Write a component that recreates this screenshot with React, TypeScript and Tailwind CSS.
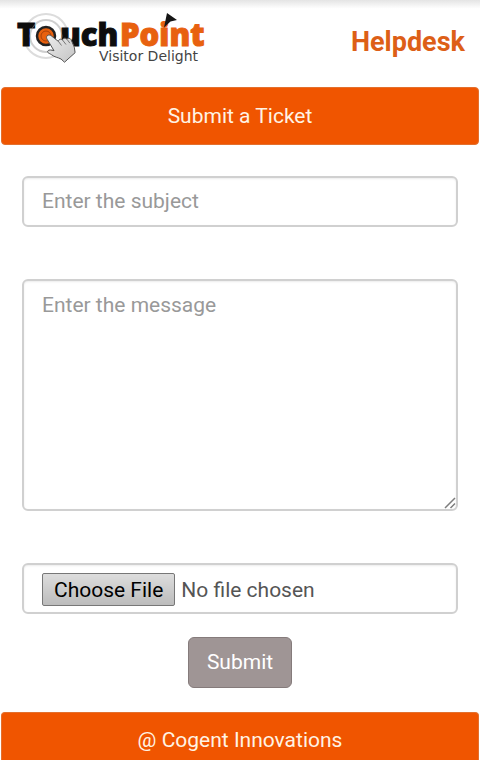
import type { ReactNode } from "react";

const field =
  "block w-full rounded-md border-2 border-[#d0d0d0] bg-white px-[18px] text-[21px] leading-7 text-[#555555] shadow-[inset_0_1px_2px_rgba(0,0,0,0.08)] placeholder:text-[#999999]";

/** Brand mark: lettering with the touch target and the hand over the "o". */
function Logo() {
  return (
    <svg width="196" height="60" viewBox="0 0 196 60" role="img" aria-label="TouchPoint Visitor Delight">
      <defs>
        <linearGradient id="hand" x1="0" y1="0" x2="1" y2="1">
          <stop offset="0" stopColor="#ececec" />
          <stop offset="1" stopColor="#c4c4c4" />
        </linearGradient>
      </defs>
      <circle cx="34" cy="28" r="22" fill="none" stroke="#dcdcdc" strokeWidth="2" />
      <circle cx="34" cy="28" r="16" fill="none" stroke="#d2d2d2" strokeWidth="2" />
      <g fontFamily="'Open Sans', 'Noto Sans', sans-serif" fontWeight="800" fontSize="31" strokeWidth="1">
        <text x="5" y="38" fill="#0d0d0d" stroke="#0d0d0d">T</text>
        <text x="48" y="38" fill="#0d0d0d" stroke="#0d0d0d">uch</text>
        <text x="108" y="38" fill="#e8610f" stroke="#e8610f">Point</text>
      </g>
      <circle cx="34" cy="28" r="16" fill="none" stroke="#c8c8c8" strokeOpacity="0.4" strokeWidth="1" />
      <circle cx="34" cy="28" r="11" fill="#ffffff" />
      <circle cx="34" cy="28" r="9" fill="#e8610f" stroke="#222222" strokeWidth="2.500" />
      <circle cx="34" cy="28" r="5" fill="none" stroke="#a8410a" strokeWidth="1" />
      <path
        d="M35 28c1-1.500 3-1.300 4.500 0l7 5.500c0-2.300 2.200-3 4-1.500 .3-2 2.800-2.600 4.400-.8 1-1.600 3.200-1.300 4.200.5l3.200 7.500 .8 5.500-10.600 9.500-3.500-3.200c-3-1.600-6.500-1.800-9.500-4.300-2.200-1.500-4.500-1.700-3.700-3.700 1-1.600 3.500-1 6.200-.3l-6.700-11.200c-.9-1.300-1.100-2.500-.3-3.500z"
        fill="url(#hand)"
        stroke="#555555"
        strokeWidth="1"
        strokeLinejoin="round"
      />
      <path d="M46.500 33.500l3 4M50.500 32l3.500 4.500M54.900 31.200l3 4" fill="none" stroke="#777777" strokeWidth="1" />
      <path d="M155 5l10 7-6.500 1.500-6.500 6z" fill="#151515" />
      <text x="87" y="53" fill="#444444" fontFamily="'DejaVu Sans', sans-serif" fontSize="14">
        Visitor Delight
      </text>
    </svg>
  );
}

function Bar({ children, className }: { children: ReactNode; className: string }) {
  return (
    <div className={`mx-px border border-[#e3702e] bg-[#f05500] text-center text-[21px] leading-7 text-[#fff3e4] ${className}`}>
      {children}
    </div>
  );
}

export default function App() {
  return (
    <div className="flex min-h-screen flex-col bg-white font-['Roboto',sans-serif]">
      <header className="flex h-[87px] items-start justify-between bg-linear-to-b from-[#e4e4e4] to-white to-10% pt-2 pr-[15px] pl-3">
        <Logo />
        <h1 className="pt-4 text-[27px] leading-9 font-bold text-[#dd5f17]">Helpdesk</h1>
      </header>

      <Bar className="rounded py-3.5">
        <h2>Submit a Ticket</h2>
      </Bar>

      <form className="flex flex-col px-[22px] pt-[31px] pb-6" onSubmit={(e) => e.preventDefault()}>
        <input type="text" aria-label="Subject" placeholder="Enter the subject" className={`${field} h-[51px] pb-0.5`} />
        <div className="relative mt-[52px]">
          <textarea
            aria-label="Message"
            placeholder="Enter the message"
            className={`${field} h-[232px] resize-none py-2.5`}
          />
          <svg className="pointer-events-none absolute right-0.5 bottom-0.5" width="12" height="12" viewBox="0 0 12 12" aria-hidden>
            <path d="M1 11L11 1M6.500 11L11 6.500" stroke="#7d7d7d" strokeWidth="1.500" fill="none" />
          </svg>
        </div>
        <input
          type="file"
          aria-label="Attachment"
          className={`${field} mt-[52px] h-[51px] py-2 file:mr-1.5 file:h-[33px] file:rounded-xs file:border file:border-solid file:border-[#777777] file:bg-linear-to-b file:from-[#dddddd] file:to-[#bcbcbc] file:px-[11px] file:text-[21px] file:leading-7 file:text-black`}
        />
        <button
          type="submit"
          className="mt-[23px] h-[51px] self-center rounded-md border border-[#857b7b] bg-[#9f9595] px-[18px] pb-0.5 text-[21px] leading-7 text-white"
        >
          Submit
        </button>
      </form>

      <Bar className="flex-1 rounded-t border-b-0 pt-[13px] pb-1.5">
        <footer>@ Cogent Innovations</footer>
      </Bar>
    </div>
  );
}
